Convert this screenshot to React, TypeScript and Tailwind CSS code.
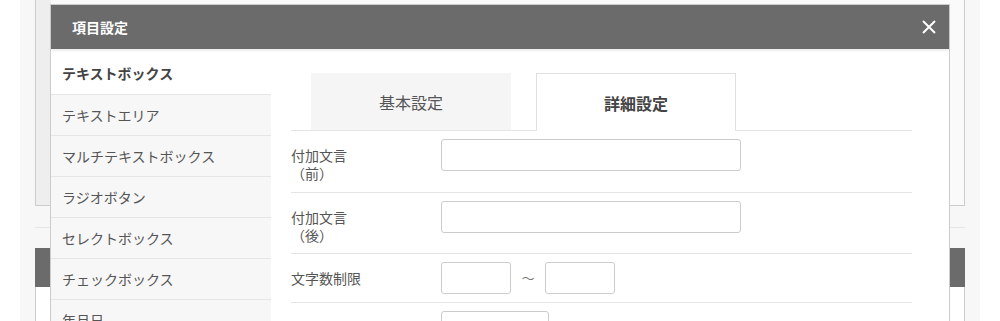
import React from "react";

const font = { fontFamily: '"Noto Sans CJK JP", "Noto Sans", sans-serif' };

const sidebarItems = [
  "テキストボックス",
  "テキストエリア",
  "マルチテキストボックス",
  "ラジオボタン",
  "セレクトボックス",
  "チェックボックス",
  "年月日",
];

export default function App() {
  return (
    <div className="relative w-[1000px] h-[321px] overflow-hidden bg-white" style={font}>
      {/* background page */}
      <div className="mx-[20px] h-full bg-[#f7f7f7] px-[15px] flex flex-col">
        <div className="h-[206px] shrink-0 border-x border-b border-[#cccccc] flex">
          <div className="w-[15px] bg-[#eeeeee]" />
          <div className="flex-1 bg-[#fafafa]" />
        </div>
        <div className="mt-[21px] shrink-0 border-t border-[#e5e5e5]" />
        <div className="mt-[20px] shrink-0 h-[39px] bg-[#6b6b6b]" />
        <div className="flex-1 bg-white border-x border-[#cccccc]" />
      </div>

      {/* modal */}
      <div className="absolute left-[50px] top-[4px] w-[900px] border border-[#cccccc] bg-white flex flex-col">
        <div className="h-[44px] shrink-0 bg-[#6b6b6b] flex items-center justify-between pl-[21px] pr-[13px] shadow-[0_2px_2px_rgba(0,0,0,0.07)] relative z-10">
          <span className="text-white text-[14px] font-bold">項目設定</span>
          <svg width="14" height="14" viewBox="0 0 14 14" className="block">
            <path d="M1 1L13 13M13 1L1 13" stroke="#ffffff" strokeWidth="2" />
          </svg>
        </div>
        <div className="flex mt-[3px]">
          {/* sidebar */}
          <div className="w-[220px] shrink-0 flex flex-col">
            {sidebarItems.map((t, i) => (
              <div
                key={t}
                className={
                  i === 0
                    ? "h-[43px] shrink-0 border-b border-[#e5e5e5] bg-white flex items-center pl-[11px] text-[14px] font-bold text-[#444444]"
                    : "h-[41px] shrink-0 border-b border-[#e5e5e5] bg-[#f7f7f7] flex items-center pl-[11px] text-[14px] text-[#555555]"
                }
              >
                {t}
              </div>
            ))}
          </div>
          {/* content */}
          <div className="flex-1 pl-[20px] pr-[37px] pt-[21px]">
            <div className="flex border-b border-[#e5e5e5] pl-[20px] gap-[25px] h-[58px]">
              <div className="w-[200px] h-[57px] bg-[#f5f5f5] flex items-center justify-center text-[16px] text-[#555555]">
                基本設定
              </div>
              <div className="w-[200px] h-[58px] bg-white border-x border-t border-[#e0e0e0] flex items-center justify-center text-[16px] font-bold text-[#444444]">
                詳細設定
              </div>
            </div>

            <div className="h-[62px] border-b border-[#e5e5e5] flex items-start pt-[8px]">
              <div className="w-[150px] pt-[7px] text-[14px] leading-[18px] text-[#555555]">
                <div>付加文言</div>
                <div>（前）</div>
              </div>
              <div className="w-[300px] h-[32px] border border-[#cccccc] rounded-[3px]" />
            </div>

            <div className="h-[61px] border-b border-[#e5e5e5] flex items-start pt-[8px]">
              <div className="w-[150px] pt-[7px] text-[14px] leading-[18px] text-[#555555]">
                <div>付加文言</div>
                <div>（後）</div>
              </div>
              <div className="w-[300px] h-[32px] border border-[#cccccc] rounded-[3px]" />
            </div>

            <div className="h-[49px] border-b border-[#e5e5e5] flex items-start pt-[8px]">
              <div className="w-[150px] h-[32px] flex items-center text-[14px] text-[#555555]">
                文字数制限
              </div>
              <div className="w-[70px] h-[32px] border border-[#cccccc] rounded-[3px]" />
              <div className="w-[34px] h-[32px] flex items-center justify-center text-[13px] text-[#777777]">
                〜
              </div>
              <div className="w-[70px] h-[32px] border border-[#cccccc] rounded-[3px]" />
            </div>

            <div className="h-[49px] flex items-start pt-[8px]">
              <div className="w-[150px] h-[32px] flex items-center text-[14px] text-[#555555]">
                入力形式
              </div>
              <div className="w-[108px] h-[32px] border border-[#cccccc] rounded-[3px]" />
            </div>
          </div>
        </div>
      </div>
    </div>
  );
}
